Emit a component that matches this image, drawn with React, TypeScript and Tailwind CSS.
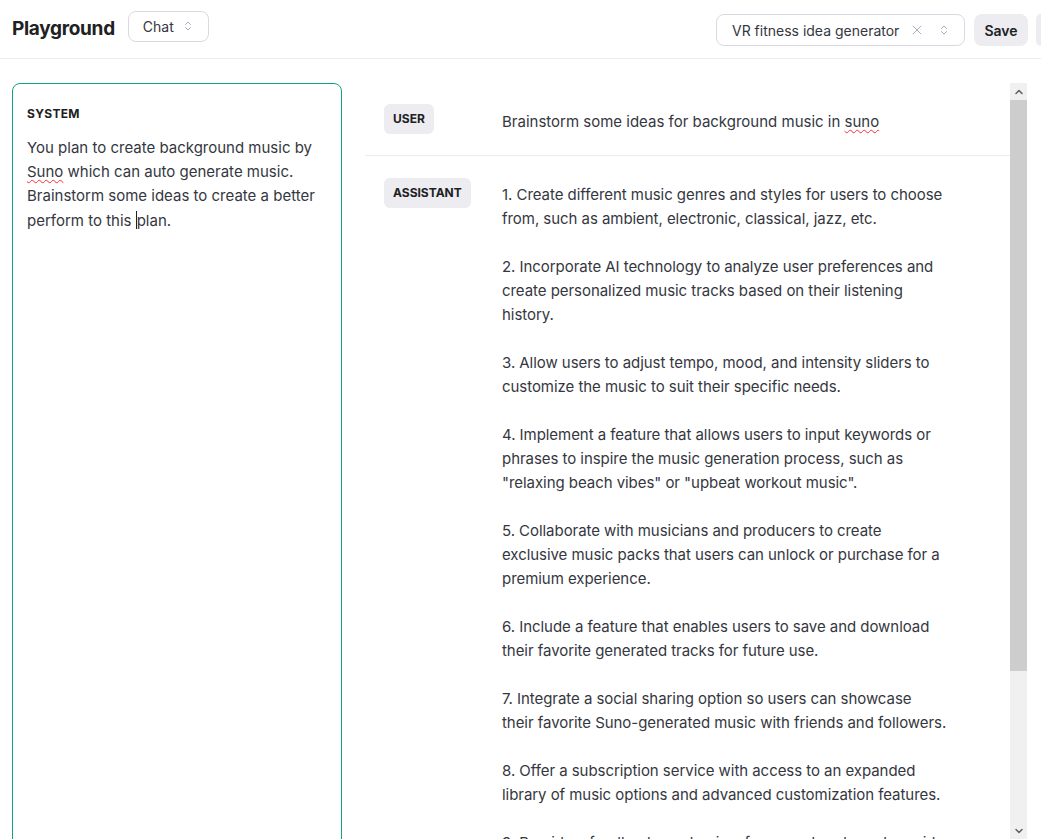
import { ChevronsUpDown, X, ChevronUp, ChevronDown } from 'lucide-react';

const ideas = [
  '1. Create different music genres and styles for users to choose from, such as ambient, electronic, classical, jazz, etc.',
  '2. Incorporate AI technology to analyze user preferences and create personalized music tracks based on their listening history.',
  '3. Allow users to adjust tempo, mood, and intensity sliders to customize the music to suit their specific needs.',
  '4. Implement a feature that allows users to input keywords or phrases to inspire the music generation process, such as "relaxing beach vibes" or "upbeat workout music".',
  '5. Collaborate with musicians and producers to create exclusive music packs that users can unlock or purchase for a premium experience.',
  '6. Include a feature that enables users to save and download their favorite generated tracks for future use.',
  '7. Integrate a social sharing option so users can showcase\ntheir favorite Suno-generated music with friends and followers.',
  '8. Offer a subscription service with access to an expanded library of music options and advanced customization features.',
  '9. Provide a feedback mechanism for users to rate and provide suggestions for improving the music generation.',
];

function Badge({ label }: { label: string }) {
  return (
    <span className="inline-block rounded-md bg-[#ececf1] px-[9px] py-[7px] text-[12px] font-bold leading-4 text-[#202123]">
      {label}
    </span>
  );
}

export default function App() {
  return (
    <div className="h-[839px] overflow-hidden bg-white text-[#353740]" style={{ fontFamily: 'Inter, "Liberation Sans", sans-serif' }}>
      <header className="flex h-[59px] items-center justify-between border-b border-[#ececf1] pl-3">
        <div className="flex items-center gap-[13px]">
          <h1 className="text-[19px] font-bold tracking-[-0.3px] text-[#202123]">Playground</h1>
          <button className="mb-[6px] flex h-[31px] w-[81px] items-center justify-between rounded-lg border border-[#d9d9e3] pl-[14px] pr-[14px] text-[14px] text-[#353740]">
            Chat
            <ChevronsUpDown size={12} className="text-[#acacbe]" />
          </button>
        </div>
        <div className="mt-[2px] flex items-center">
          <div className="flex h-[32px] w-[249px] items-center rounded-lg border border-[#d9d9e3] pl-[15px] pr-[14px] text-[14px] text-[#353740]">
            <span className="flex-1">VR fitness idea generator</span>
            <X size={16} strokeWidth={1.5} className="mr-[13px] text-[#acacbe]" />
            <ChevronsUpDown size={12} className="text-[#acacbe]" />
          </div>
          <button className="ml-[9px] h-[32px] w-[54px] rounded-lg bg-[#ececf1] text-[14px] font-semibold text-[#202123]">Save</button>
          <button className="ml-[8px] h-[32px] w-[5px] rounded-l-md bg-[#ececf1]"></button>
        </div>
      </header>

      <div className="flex pt-6">
        <div className="ml-3 h-[800px] w-[330px] shrink-0 rounded-lg border border-[#10a37f] px-[14px] pt-[21px]">
          <div className="text-[12px] font-bold tracking-wide text-[#202123]">SYSTEM</div>
          <p className="mt-[13px] text-[15px] leading-6">
            You plan to create background music by{' '}
            <span className="underline decoration-red-500 decoration-wavy decoration-1 underline-offset-2">Suno</span> which can auto generate music. Brainstorm some ideas to create a better perform to this{' '}
            <span className="inline-block h-[18px] w-px translate-y-[3px] bg-[#202123]"></span>plan.
          </p>
        </div>

        <div className="ml-[23px] flex-1">
          <div className="flex border-b border-[#ececf1] pb-[21px] pt-[21px] pl-[19px]">
            <div className="w-[118px] shrink-0"><Badge label="USER" /></div>
            <p className="pt-[6px] text-[15px] leading-6">
              Brainstorm some ideas for background music in{' '}
              <span className="underline decoration-red-500 decoration-wavy decoration-1 underline-offset-2">suno</span>
            </p>
          </div>
          <div className="flex pl-[19px] pt-[22px]">
            <div className="w-[118px] shrink-0"><Badge label="ASSISTANT" /></div>
            <div className="w-[447px] pt-[5px] text-[15px] leading-6 tracking-[-0.05px]">
              {ideas.map((t, i) => (
                <p key={i} className="mb-6 whitespace-pre-line">{t}</p>
              ))}
            </div>
          </div>
        </div>

        <div className="mr-[14px] flex h-[756px] w-[17px] shrink-0 flex-col bg-[#f0f0f0]">
          <div className="flex h-[17px] items-center justify-center">
            <ChevronUp size={12} strokeWidth={3} className="text-[#606060]" />
          </div>
          <div className="h-[571px] bg-[#cdcdcd]"></div>
          <div className="flex-1"></div>
          <div className="flex h-[17px] items-center justify-center">
            <ChevronDown size={12} strokeWidth={3} className="text-[#606060]" />
          </div>
        </div>
      </div>
    </div>
  );
}
